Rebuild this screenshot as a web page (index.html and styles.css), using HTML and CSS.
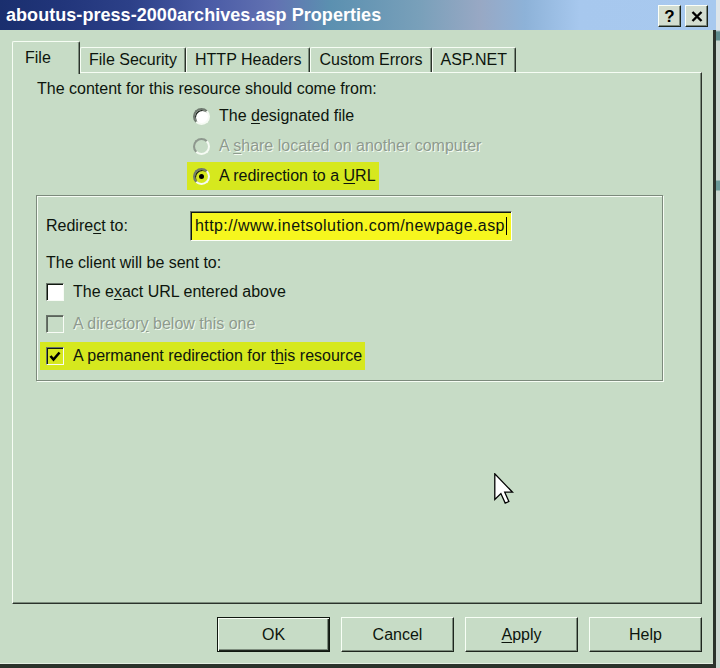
FILE: index.html
```html
<!DOCTYPE html>
<html>
<head>
<meta charset="utf-8">
<title>aboutus-press-2000archives.asp Properties</title>
<link rel="stylesheet" href="styles.css">
</head>
<body>
<div class="screen">
  <div class="dialog">
    <div class="titlebar">
      <span class="title">aboutus-press-2000archives.asp Properties</span>
      <div class="caption-btns">
        <span class="cbtn">?</span>
        <span class="cbtn"><svg width="12" height="11" viewBox="0 0 12 11"><path d="M1.5 1 L10.5 10 M10.5 1 L1.5 10" stroke="#000" stroke-width="2.4" fill="none"/></svg></span>
      </div>
    </div>
    <div class="client">
      <div class="tabs">
        <div class="tab active">File</div>
        <div class="tab">File Security</div>
        <div class="tab">HTTP Headers</div>
        <div class="tab">Custom Errors</div>
        <div class="tab">ASP.NET</div>
      </div>
      <div class="page">
        <p class="lead">The content for this resource should come from:</p>
        <div class="choices">
          <div class="opt"><span class="radio"></span><span>The <u>d</u>esignated file</span></div>
          <div class="opt disabled"><span class="radio"></span><span>A <u>s</u>hare located on another computer</span></div>
          <div class="opt hl"><span class="radio on"></span><span>A redirection to a <u>U</u>RL</span></div>
        </div>
        <div class="group">
          <div class="redirect">
            <span class="rlabel">Redire<u>c</u>t to:</span>
            <div class="field">http://www.inetsolution.com/newpage.asp<span class="caret"></span></div>
          </div>
          <p class="sent">The client will be sent to:</p>
          <div class="checks">
            <div class="opt"><span class="check"></span><span>The e<u>x</u>act URL entered above</span></div>
            <div class="opt disabled"><span class="check"></span><span>A director<u>y</u> below this one</span></div>
            <div class="opt hl"><span class="check on"><svg width="12" height="11" viewBox="0 0 12 11"><path d="M1.5 5 L4.5 8.5 L10.5 1.5" stroke="#000" stroke-width="2.6" fill="none"/></svg></span><span>A permanent redirection for t<u>h</u>is resource</span></div>
          </div>
        </div>
      </div>
      <div class="buttons">
        <button class="btn default">OK</button>
        <button class="btn">Cancel</button>
        <button class="btn"><u>A</u>pply</button>
        <button class="btn">Help</button>
      </div>
    </div>
  </div>
  <div class="other"></div>
  <svg class="cursor" width="20" height="32" viewBox="0 0 12.5 20"><path d="M0.5 0.5 V16.5 L4.3 12.8 L7 18.8 L9.3 17.8 L6.7 12 H11.6 Z" fill="#fff" stroke="#000" stroke-width="0.8" stroke-linejoin="miter"/></svg>
</div>
</body>
</html>
```
FILE: styles.css
```css
* { box-sizing: border-box; }
html, body { margin: 0; padding: 0; }
body {
  width: 720px;
  height: 668px;
  overflow: hidden;
  background: #c7dcc6;
  font-family: "Liberation Sans", Arial, sans-serif;
  font-size: 16px;
  color: #0d150d;
}
u { text-underline-offset: 2px; }
.screen { position: relative; display: flex; width: 720px; height: 668px; }
.dialog { width: 716px; height: 668px; display: flex; flex-direction: column; background: #c7dcc6; }

.titlebar {
  height: 30px;
  flex: none;
  display: flex;
  align-items: center;
  justify-content: space-between;
  padding: 0 8px 0 6px;
  background: linear-gradient(90deg, #1a2f6e 0px, #21357a 60px, #2c4088 130px, #4b5ca6 210px, #6272b2 275px, #5b90b0 330px, #79a0ba 420px, #98a8c4 480px, #8db2d8 525px, #a7c8ee 580px, #a8c9ef 716px);
}
.title { color: #fff; font-weight: bold; font-size: 18px; letter-spacing: 0.05px; }
.caption-btns { display: flex; gap: 4px; margin-top: 2px; }
.cbtn {
  width: 23px;
  height: 22px;
  display: flex;
  align-items: center;
  justify-content: center;
  background: #d3ddd0;
  border: 1px solid;
  border-color: #fbfff8 #1c241c #1c241c #fbfff8;
  box-shadow: inset -1px -1px 0 #7d897d;
  font-weight: bold;
  font-size: 17px;
  line-height: 1;
  color: #000;
}

.client {
  flex: 1;
  display: flex;
  flex-direction: column;
  padding: 11px 11px 0 12px;
  border-right: 3px solid #2b332b;
  border-bottom: 4px solid #2b332b;
  box-shadow: inset 0 -1px 0 #e4eee2;
}

.tabs { display: flex; align-items: flex-end; height: 31px; position: relative; z-index: 1; }
.tab {
  height: 25px;
  display: flex;
  align-items: center;
  padding: 0 8px;
  border-top: 1px solid #f6fdf4;
  border-left: 1px solid #f6fdf4;
  border-right: 1px solid #2b332b;
  box-shadow: inset -1px 0 0 #7d8d7d;
  border-radius: 2px 2px 0 0;
  background: #c7dcc6;
  white-space: nowrap;
}
.tab.active {
  width: 68px;
  height: 33px;
  margin-bottom: -2px;
  padding-left: 12px;
}

.page {
  width: 690px;
  height: 532px;
  flex: none;
  padding: 6px 0 0 24px;
  border-top: 1px solid #f6fdf4;
  border-left: 1px solid #f6fdf4;
  border-right: 1px solid #2b332b;
  border-bottom: 1px solid #2b332b;
  box-shadow: inset -1px -1px 0 #7d8d7d;
}
.lead, .sent { margin: 0; line-height: 20px; }

.choices {
  display: flex;
  flex-direction: column;
  align-items: flex-start;
  gap: 2px;
  margin: 3px 0 0 150px;
}
.opt {
  display: flex;
  align-items: center;
  gap: 9px;
  height: 28px;
  padding: 0 3px 0 6px;
  white-space: nowrap;
}
.opt.hl { background: #d6e81e; }
.opt.disabled { color: #8e9a8e; text-shadow: 1px 1px 0 #f4fbf2; }

.radio {
  width: 17px;
  height: 17px;
  flex: none;
  border-radius: 50%;
  border: 2px solid;
  border-color: #6f796f #f6fbf4 #f6fbf4 #6f796f;
  background: #fff;
  box-shadow: inset 1px 1px 0 #1c241c;
  display: flex;
  align-items: center;
  justify-content: center;
}
.opt.disabled .radio { background: #c7dcc6; box-shadow: none; border-color: #8e988e #f6fbf4 #f6fbf4 #8e988e; }
.radio.on { background: #d6e81e; }
.radio.on::after { content: ""; width: 5px; height: 5px; border-radius: 50%; background: #000; }

.group {
  width: 627px;
  height: 186px;
  margin: 5px 0 0 -1px;
  padding: 15px 0 0 9px;
  border: 1px solid #7c8a7c;
  box-shadow: inset 1px 1px 0 #f6fdf4, 1px 1px 0 #f6fdf4;
}
.redirect { display: flex; align-items: center; height: 30px; }
.rlabel { width: 144px; flex: none; }
.field {
  width: 322px;
  height: 30px;
  display: flex;
  align-items: center;
  padding-left: 4px;
  background: #f6f61e;
  border: 1px solid;
  border-color: #6a746a #fbfff8 #fbfff8 #6a746a;
  box-shadow: inset 1px 1px 0 #101810;
  white-space: nowrap;
  letter-spacing: 0.42px;
}
.caret { width: 1px; height: 18px; background: #000; margin-left: 1px; }
.sent { margin-top: 12px; }
.checks {
  display: flex;
  flex-direction: column;
  align-items: flex-start;
  gap: 4px;
  margin: 5px 0 0 -6px;
}
.check {
  width: 18px;
  height: 18px;
  flex: none;
  display: flex;
  align-items: center;
  justify-content: center;
  background: #fff;
  border: 1px solid;
  border-color: #6a746a #f8fcf6 #f8fcf6 #6a746a;
  box-shadow: inset 1px 1px 0 #101810;
}
.opt.disabled .check { background: #c7dcc6; box-shadow: inset 1px 1px 0 #5a645a; }
.check.on { background: #d6e81e; }

.buttons {
  display: flex;
  justify-content: flex-end;
  gap: 11px;
  margin-top: 13px;
}
.btn {
  width: 113px;
  height: 35px;
  font-family: inherit;
  font-size: 16px;
  color: #0d150d;
  background: #c7dcc6;
  border: 1px solid;
  border-color: #f8fff6 #1e261e #1e261e #f8fff6;
  box-shadow: inset -1px -1px 0 #7d8d7d;
  padding: 0;
}
.btn.default {
  border-color: #101810;
  box-shadow: inset 1px 1px 0 #f8fff6, inset -1px -1px 0 #1e261e, inset -2px -2px 0 #7d8d7d;
}

.other {
  width: 4px;
  height: 668px;
  background: linear-gradient(180deg, #dfe6ea 0px, #dfe6ea 30px, #5d8c8c 32px, #5d8c8c 40px, #cbd8d0 41px, #cbd8d0 180px, #6a9a98 181px, #6a9a98 190px, #cbd8d0 191px);
}
.cursor { position: absolute; left: 494px; top: 473px; }
```
